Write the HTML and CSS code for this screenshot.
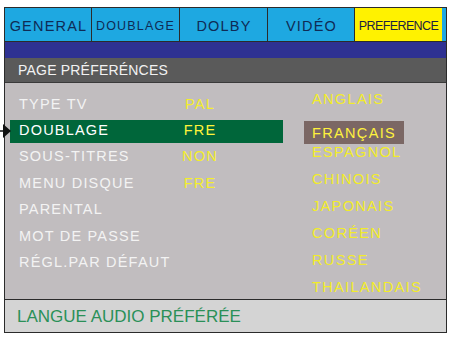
FILE: index.html
```html
<!DOCTYPE html>
<html lang="fr">
<head>
<meta charset="utf-8">
<title>Préférences</title>
<link rel="stylesheet" href="styles.css">
</head>
<body>
<div class="osd">
  <div class="tabs">
    <div class="tab wide">GENERAL</div>
    <div class="tab mid">DOUBLAGE</div>
    <div class="tab wide">DOLBY</div>
    <div class="tab wide">VIDÉO</div>
    <div class="tab narrow active">PREFERENCE</div>
  </div>
  <div class="band"></div>
  <div class="title">PAGE PRÉFERÉNCES</div>
  <div class="panel">
    <div class="settings">
      <div class="row"><span class="label">TYPE TV</span><span class="value">PAL</span></div>
      <div class="row selected"><span class="label">DOUBLAGE</span><span class="value">FRE</span></div>
      <div class="row"><span class="label">SOUS-TITRES</span><span class="value">NON</span></div>
      <div class="row"><span class="label">MENU DISQUE</span><span class="value">FRE</span></div>
      <div class="row"><span class="label">PARENTAL</span></div>
      <div class="row"><span class="label">MOT DE PASSE</span></div>
      <div class="row"><span class="label">RÉGL.PAR DÉFAUT</span></div>
    </div>
    <div class="langs">
      <div class="lang">ANGLAIS</div>
      <div class="lang current">FRANÇAIS</div>
      <div class="lang">ESPAGNOL</div>
      <div class="lang">CHINOIS</div>
      <div class="lang">JAPONAIS</div>
      <div class="lang">CORÉEN</div>
      <div class="lang">RUSSE</div>
      <div class="lang">THAILANDAIS</div>
    </div>
  </div>
  <div class="footer">LANGUE AUDIO PRÉFÉRÉE</div>
</div>
<svg class="pointer" width="11" height="16" viewBox="0 0 11 16">
  <line x1="0" y1="8" x2="5" y2="8" stroke="#111" stroke-width="1.5"/>
  <polygon points="3,1 11,8 3,15" fill="#111"/>
</svg>
</body>
</html>
```

FILE: styles.css
```css
html, body {
  margin: 0;
  padding: 0;
  background: #ffffff;
}

body {
  position: relative;
  font-family: "Liberation Sans", Arial, sans-serif;
}

.osd {
  margin: 7px 0 0 4px;
  width: 441px;
  border: 1px solid #2b2b2b;
  display: flex;
  flex-direction: column;
}

.tabs {
  display: flex;
  height: 33px;
  border-bottom: 1px solid #2b2b2b;
  background: #1ea8e1;
}

.tab {
  display: flex;
  align-items: center;
  justify-content: center;
  padding-top: 3px;
  box-sizing: border-box;
  color: #0f2b55;
  font-size: 13.5px;
  border-right: 1px solid #2b2b2b;
  white-space: nowrap;
}

.tab:nth-child(1) { width: 87px; }
.tab:nth-child(2) { width: 88px; }
.tab:nth-child(3) { width: 88px; }
.tab:nth-child(4) { width: 87px; }
.tab:nth-child(5) { width: 87px; border-right: none; }

.tab.wide { font-size: 14.5px; letter-spacing: 1.2px; padding-left: 1px; }
.tab.mid { font-size: 12.5px; letter-spacing: 1.2px; }
.tab.narrow { font-size: 12.5px; letter-spacing: -0.6px; }

.tab.active {
  background: #fff200;
  color: #1c2240;
}

.band {
  height: 16px;
  background: #2e3192;
}

.title {
  height: 24px;
  border-bottom: 1px solid #3a3a3a;
  background: #5a5a5a;
  color: #f2f2f2;
  font-size: 14px;
  letter-spacing: 0.2px;
  display: flex;
  align-items: center;
  padding-left: 13px;
}

.panel {
  height: 216px;
  border-bottom: 1px solid #2b2b2b;
  background: #c1bdbf;
  display: flex;
  overflow: hidden;
}

.settings {
  margin-left: 5px;
  width: 273px;
  padding-top: 10.6px;
  display: flex;
  flex-direction: column;
  gap: 3.4px;
}

.row {
  height: 23px;
  padding-bottom: 3px;
  box-sizing: border-box;
  display: flex;
  align-items: center;
  font-size: 14.5px;
  letter-spacing: 1.2px;
  white-space: nowrap;
}

.label {
  width: 151px;
  padding-left: 9px;
  color: #f3f3f3;
}

.value {
  width: 60px;
  text-align: center;
  color: #f4ee2c;
}

.row.selected {
  background: #00663a;
}

.row.selected .label { color: #ffffff; }
.row.selected .value { color: #fff43a; }

.langs {
  margin-left: 21px;
  padding-top: 4.2px;
  display: flex;
  flex-direction: column;
  gap: 3.9px;
}

.lang {
  height: 23px;
  flex: none;
  box-sizing: border-box;
  display: flex;
  align-items: center;
  padding-left: 8px;
  font-size: 14.5px;
  letter-spacing: 1.35px;
  color: #f2ec2a;
  white-space: nowrap;
}

.lang.current {
  width: 100px;
  background: #7b6764;
  color: #fff23c;
  position: relative;
  top: 7px;
}

.footer {
  height: 32px;
  background: #d4d4d4;
  color: #2a9058;
  font-size: 17px;
  display: flex;
  align-items: center;
  padding-left: 12px;
  padding-top: 1px;
  box-sizing: border-box;
}

.pointer {
  position: absolute;
  left: 0;
  top: 123px;
}
```
